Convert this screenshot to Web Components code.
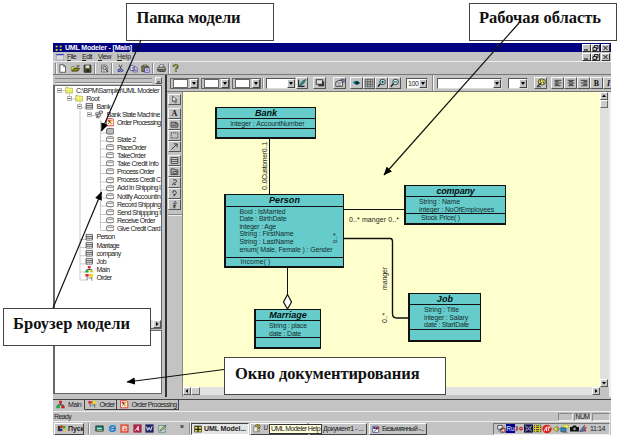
<!DOCTYPE html>
<html lang="ru"><head><meta charset="utf-8"><title>UML Modeler</title>
<style>
html,body{margin:0;width:620px;height:439px;overflow:hidden;background:#fff}
</style></head><body>
<modeler-page></modeler-page>
<script>
const UI = '"Liberation Sans",Arial,sans-serif';
const define = (name, html, ready) => {
  const t = document.createElement('template');
  t.innerHTML = html;
  customElements.define(name, class extends HTMLElement {
    connectedCallback() {
      if (this.shadowRoot) return;
      const r = this.attachShadow({mode: 'open'});
      r.append(t.content.cloneNode(true));
      if (ready) ready(this, r);
    }
  });
};
const ICONS = {
  new: `<path d="M2.500 1h5l2.500 2.500v7.500h-7.500z" fill="#fff" stroke="#222" stroke-width=".9"/><path d="M7.500 1.500v2h2" fill="none" stroke="#222" stroke-width=".8"/>`,
  open: `<path d="M1 9.500v-6h3l1 1h4v2" fill="#ee6" stroke="#553" stroke-width=".8"/><path d="M1 9.500l2.500-3.500h8l-2.500 3.500z" fill="#880" stroke="#222" stroke-width=".8"/><path d="M7 2.500q2-1.500 3.500.7M10.700 1.500v2h-2" fill="none" stroke="#222" stroke-width=".7"/>`,
  save: `<path d="M1.500 1.500h9v9.500h-9z" fill="#553" stroke="#111"/><path d="M3.500 1.800h5v3.700h-5z" fill="#ddc"/><path d="M4.500 7.500h3.500v2.500h-3.500z" fill="#111"/>`,
  preview: `<path d="M2 1.500h6l1.500 1.500v7.500h-7.500z" fill="#eee" stroke="#333" stroke-width=".8"/><circle cx="6" cy="5.500" r="2.200" fill="#bde" stroke="#222"/><path d="M7.500 7l3 3.500" stroke="#222" stroke-width="1.300"/><path d="M3 3h3M3 9h3" stroke="#777" stroke-width=".6"/>`,
  cut: `<path d="M4 1l3 6M8 1l-3 6" stroke="#333" stroke-width="1"/><circle cx="4" cy="8.700" r="1.500" fill="none" stroke="#22a" stroke-width="1.200"/><circle cx="7.700" cy="8.700" r="1.500" fill="none" stroke="#22a" stroke-width="1.200"/>`,
  copy: `<path d="M1.500 2h4l1.500 1.500v5h-5.500zM5.500 4h4l1.500 1.500v5h-5.500z" fill="#eef" stroke="#226" stroke-width=".8"/><path d="M3 5h2M7 7h3M7 8.700h3" stroke="#226" stroke-width=".7"/>`,
  paste: `<path d="M1 2.500h8.500v7.500h-8.500z" fill="#774" stroke="#222" stroke-width=".8"/><path d="M3.500 1h3.500v2h-3.500z" fill="#dd8" stroke="#222" stroke-width=".6"/><path d="M5 5h6v6h-6z" fill="#eef" stroke="#228" stroke-width=".9"/><path d="M6.500 7h3M6.500 8.700h3" stroke="#228" stroke-width=".7"/>`,
  print: `<path d="M4 1h5l-1.500 4h-5z" fill="#fff" stroke="#222" stroke-width=".7"/><path d="M1 5.500l1.500-1.500h8l.5 1.500v4h-10z" fill="#aaa" stroke="#222" stroke-width=".9"/><path d="M1 7.500h10M3 9.800h7" stroke="#222"/><path d="M8 6.500h1.500" stroke="#cc3"/>`,
  help: `<path d="M3.500 4q0-2.600 2.700-2.600t2.500 2.200q0 1.300-1.300 2t-1 1.700M6.300 8.700v2" fill="none" stroke="#222" stroke-width="2.400"/><path d="M3.700 3.800q0-2.100 2.500-2.100t2.200 1.800q0 1.200-1.300 1.900t-.9 1.700M6.200 9v1.400" fill="none" stroke="#dd2" stroke-width="1.200"/>`,
  folder: `<path d="M1 10v-8h3.500l1 1.200h5.500v6.800z" fill="#ee6" stroke="#995" stroke-width=".8"/><path d="M2 4.700h8" stroke="#ffb" stroke-width=".8"/>`,
  class: `<path d="M1.500 2h9v8h-9z" fill="#fff" stroke="#333"/><path d="M1.500 4.700h9M1.500 7.300h9" stroke="#333" stroke-width="1.200"/>`,
  machine: `<path d="M1 4h5v2.500h-5zM6 1.500h4.500v3h-4.500zM2 9h4v2h-4z" fill="#eee" stroke="#333" stroke-width=".9"/><path d="M3.500 6.500v3M8 4.500v4h-2" fill="none" stroke="#333" stroke-width=".9"/>`,
  state: `<rect x=".7" y="2.500" width="10.600" height="7" rx="2.700" fill="#fff" stroke="#333"/><path d="M2 5h8" stroke="#555" stroke-width=".8"/>`,
  blank: `<rect x=".7" y="2" width="10.600" height="8" rx="2.400" fill="#bbb" stroke="#333"/>`,
  process: `<path d="M.8 1h8l2.200 1.500v8.500h-10.200z" fill="#fff" stroke="#d33" stroke-width="1.300"/><path d="M2.500 2.500h3v2.500h-3z" fill="#e22"/><path d="M6 2.500h3.500v2.500h-3.500z" fill="#dc2"/><path d="M4 4l4 4M7 3.500l-4 5" stroke="#222" stroke-width=".9"/><path d="M5.500 6.500h3.500v2.500h-3.500z" fill="#eb2"/>`,
  main: `<path d="M6 4v3M2.500 8v-1.500h7v1.500" fill="none" stroke="#222"/><path d="M4 1.500h4v3h-4z" fill="#d22"/><path d="M.5 7.500h4.500v3h-4.500z" fill="#1a3"/><path d="M7 7.500h4.500v3h-4.500z" fill="#dc1"/>`,
  mainTab: `<path d="M6 3v4M2.500 8v-1.500h7v1.500" fill="none" stroke="#222"/><path d="M4 1h4v3.500h-4z" fill="#d22"/><path d="M.5 7.500h4.500v3.500h-4.500z" fill="#1a3"/><path d="M7 7.500h4.500v3.500h-4.500z" fill="#b22"/>`,
  order: `<path d="M3 3h6M3 4v6M9.500 5v6M5 7h4" fill="none" stroke="#444" stroke-width=".9"/><path d="M.5 1.500h4.500v3.500h-4.500z" fill="#e22"/><path d="M7 1.500h4.500v4h-4.500z" fill="#ed1"/>`,
  pencil: `<path d="M2 2v8h7" fill="none" stroke="#222" stroke-width="1.300"/><path d="M3 9q3-6 6-6.500l1.500-.8-1.500 3q-2 4-6 4.300z" fill="#399" stroke="#144" stroke-width=".8"/>`,
  shadow: `<path d="M4 4h7v6h-7z" fill="#333"/><path d="M1.500 2h7.500v5.500h-7.500z" fill="#ddd" stroke="#222"/>`,
  props: `<path d="M1 5l3-2h5v7h-8z" fill="#eee" stroke="#333"/><path d="M1 5h8M3 7h4M3 8.700h4" stroke="#555" stroke-width=".8"/><path d="M7 1.500h4v3.500l-2-1z" fill="#aac" stroke="#225" stroke-width=".8"/>`,
  eye: `<path d="M1 5.500q4.500-4.500 9 .5q-4.500 4-9-.5z" fill="#077"/><circle cx="6" cy="6" r="1.800" fill="#013"/>`,
  grid: `<path d="M1.500 1.500h9v9h-9zM4.500 1.500v9M7.500 1.500v9M1.500 4.500h9M1.500 7.500h9" fill="none" stroke="#444" stroke-width=".9"/>`,
  zin: `<circle cx="6.700" cy="4.700" r="3.300" fill="#cee" stroke="#222"/><path d="M4 7l-3 3.500" stroke="#222" stroke-width="1.700"/><path d="M5 4.700h3.500M6.700 3v3.500" stroke="#055" stroke-width="1.200"/>`,
  zout: `<circle cx="6.700" cy="4.700" r="3.300" fill="#cee" stroke="#222"/><path d="M4 7l-3 3.500" stroke="#222" stroke-width="1.700"/><path d="M5 4.700h3.500" stroke="#055" stroke-width="1.200"/>`,
  palette: `<ellipse cx="7" cy="4.700" rx="4.300" ry="3.600" fill="#ee5" stroke="#222" stroke-width=".9"/><circle cx="5.300" cy="3.500" r="1" fill="#c22"/><circle cx="8.200" cy="3.300" r="1" fill="#2a3"/><circle cx="9" cy="5.500" r="1" fill="#23c"/><path d="M6.500 5.500l-5 5" stroke="#333" stroke-width="1.600"/><path d="M1 10.500h5" stroke="#333"/>`,
  left: `<path d="M1 2h10M1 4h6M1 6h10M1 8h6M1 10h9" stroke="#111" stroke-width="1.100"/>`,
  center: `<path d="M1 2h10M3 4h6M1 6h10M3 8h6M2 10h8" stroke="#111" stroke-width="1.100"/>`,
  right: `<path d="M1 2h10M5 4h6M1 6h10M5 8h6M2 10h9" stroke="#111" stroke-width="1.100"/>`,
  cursor: `<path d="M3.500 1.500v7.500l2-1.800 1.700 3.500 1.300-.6-1.600-3.300h2.400z" fill="#fff" stroke="#222" stroke-width=".9"/>`,
  note: `<path d="M1.500 3h6.500l2.500 2v4.500h-9z" fill="#bbb" stroke="#222"/><path d="M3 5.500h4M3 7.500h6M7.500 3v2.500h3" fill="none" stroke="#222" stroke-width=".8"/>`,
  dashed: `<path d="M1.500 2.500h9v7h-9z" fill="none" stroke="#222" stroke-dasharray="1.500 1"/>`,
  diag: `<path d="M2 10l7-7M5 2.500h4.500v4.500" fill="none" stroke="#222" stroke-width="1.100"/>`,
  classBtn: `<path d="M1.500 2h9v8h-9z" fill="#ccc" stroke="#333"/><path d="M1.500 4.700h9M1.500 7.300h9" stroke="#333" stroke-width="1"/>`,
  package: `<path d="M1.500 2.500h4l1 1.500h4v6h-9z" fill="#bbb" stroke="#222"/><path d="M4 6h5v2.500h-5z" fill="none" stroke="#222" stroke-width=".8"/>`,
  assoc: `<path d="M4 2.500h4q2 2-1 4h-2l-2 3M5 8.500h3" fill="none" stroke="#222" stroke-width="1"/>`,
  ring: `<path d="M4 2.500h3q3 2.500 0 5l-2 2.500M4 2.500v3M4 7.500h3" fill="none" stroke="#222"/>`,
  inherit: `<path d="M7 1.500l-2.500 3.500h4z" fill="#eee" stroke="#222" stroke-width=".8"/><path d="M6.500 5v3l-3 2.500M4 7.500h3M6.500 7v4" fill="none" stroke="#222"/>`,
  start: `<path d="M1 2.500h3v7h-3" fill="#333"/><path d="M4 2.500q2-1.300 3.500-.4l-.2 3.600h-3.300z" fill="#d22"/><path d="M7.800 2.300l3.400.3v3.300l-3.500-.2z" fill="#2a2"/><path d="M4 6.200h3.300v3.500q-1.800-.6-3.300.4z" fill="#22c"/><path d="M7.700 6.300h3.500v3.800l-3.500-.4z" fill="#dc2"/>`,
  desk: `<path d="M1 2.500h10v7h-10z" fill="#276" stroke="#134"/><path d="M2.500 5h6.500v2h-6.500z" fill="#aed"/><path d="M2 8.700h8" stroke="#db4"/>`,
  ie: `<circle cx="6" cy="6" r="3.700" fill="none" stroke="#27c" stroke-width="2"/><path d="M3 6h6" stroke="#27c" stroke-width="1.500"/><path d="M1 9.500q-1-3 9.500-8" fill="none" stroke="#4ad" stroke-width="1"/>`,
  ppt: `<path d="M.5.500h11v11h-11z" fill="#d43"/><path d="M3 3h6v6h-6z" fill="none" stroke="#fff"/><path d="M4.500 4v4M4.500 4h3v2h-3" fill="none" stroke="#fff"/>`,
  access: `<path d="M.5.500h11v11h-11z" fill="#a24"/><path d="M3 9l4-6v6M5 7h3" fill="none" stroke="#fff" stroke-width="1.200"/>`,
  word: `<path d="M.5.500h11v11h-11z" fill="#226"/><path d="M2 3.500l1.500 5 2-4 2 4 2-5.500" fill="none" stroke="#fff" stroke-width="1.200"/>`,
  edit: `<path d="M1 2h8.500v9h-8.500z" fill="#ddd" stroke="#276" stroke-width=".8"/><path d="M2.500 9q2-5 8.500-7.500-2 6-8 8z" fill="#db5" stroke="#267" stroke-width=".9"/>`,
  uml: `<path d="M.5 1h11v10h-11z" fill="#222"/><path d="M1.500 2.500h3.500v3h-3.500zM7 2.500h3.500v3h-3.500zM1.500 7.500h3.500v2.500h-3.500zM7 7.500h3.500v2.500h-3.500z" fill="#dd3"/>`,
  umlt: `<path d="M1 2.500h3v2.500h-3zM7 2.500h3v2.500h-3zM1 7.500h3v2.500h-3zM7 7.500h3v2.500h-3z" fill="#dd3"/>`,
  hlp: `<path d="M1 4h8v7h-8z" fill="#eee" stroke="#555" stroke-width=".8"/><path d="M4 4q0-2.500 2.700-2.500t2.500 2q0 1.200-1.500 2t-1 2M6.700 8.800v1.500" fill="none" stroke="#222" stroke-width="2.400"/><path d="M4 4q0-2.500 2.700-2.500t2.500 2q0 1.200-1.500 2t-1 2M6.700 8.800v1.500" fill="none" stroke="#ed2" stroke-width="1.300"/>`,
  paint: `<path d="M1 2h9v9h-9z" fill="#fff" stroke="#237" stroke-width="1"/><path d="M2 3h3.500v3h-3.500z" fill="#22a"/><path d="M6 3h4v3.500h-4z" fill="#c22"/><path d="M3 10l6-6" stroke="#222" stroke-width="1.200"/>`,
  child: `<path d="M.5 2h11v8.500h-11z" fill="#ddd" stroke="#88a" stroke-width=".8"/><path d="M.5 2.500h11" stroke="#33c" stroke-width="1.800"/>`,
  t1: `<path d="M1 2h6v5h-6zM5 6h6v5h-6z" fill="#eee" stroke="#333"/><path d="M2 10l8-7" stroke="#444"/><circle cx="8.500" cy="8.500" r="2" fill="none" stroke="#d22"/>`,
  t3: `<path d="M1 2.500q3 3.500 0 7M3 3v6" stroke="#622" fill="none"/><circle cx="8" cy="6" r="2.500" fill="#b22"/><circle cx="8" cy="6" r=".9" fill="#fcc"/>`,
  t4: `<path d="M0 .5h12v11h-12z" fill="#114"/><path d="M2 2q3 4 0 8M10 2q-3 4 0 8M4 3l4 6M8 3l-4 6" fill="none" stroke="#bbd" stroke-width="1"/>`,
  t5: `<path d="M1 3h10M1 6h10M1 9h10M3.500 1v10M8.500 1v10" stroke="#222" stroke-width="2.400"/><path d="M1 3h10M1 6h10M1 9h10M3.500 1v10M8.500 1v10" stroke="#ed2" stroke-width="1.300"/>`,
  t6: `<ellipse cx="6" cy="6" rx="5.700" ry="5" fill="#d22"/><path d="M2.500 8.500l3-5v5M6.500 3.700h4M8.500 3.700l-1 4.500" stroke="#fff" fill="none" stroke-width="1.100"/>`,
  t7: `<path d="M2 4.500h2.500l3.500-3.500v10l-3.500-3.500h-2.500z" fill="#dd3" stroke="#663" stroke-width=".8"/><path d="M9.500 3.500q2 2.500 0 5" fill="none" stroke="#333"/>`,
  t8: `<path d="M4 1h7v5h-7z" fill="#ee4" stroke="#995" stroke-width=".7"/><path d="M1 5h7v5h-7z" fill="#38b" stroke="#146" stroke-width=".8"/><path d="M3 11h7" stroke="#555"/>`,
  t9: `<path d="M0 4h3l1-2h4l1 2h3v6h-12z" fill="#111"/><circle cx="6" cy="6.500" r="1.800" fill="#999"/>`,
  t10: `<path d="M1 10l5-7 3 6z" fill="#39c" stroke="#136" stroke-width=".8"/><path d="M7 1l2 6M4 6l5 4M10 4l-5 6" stroke="#c33" stroke-width="1.200"/>`,
};

// Single-line text whose tracking is tuned to occupy the width in `w`.
define('fit-text', `<style>:host{display:inline-block;white-space:pre;line-height:1}span{display:inline-block}</style><span><slot></slot></span>`, (el, r) => {
  const w = +el.getAttribute('w'); if (!w) return;
  el.style.width = w + 'px';
  const s = r.querySelector('span');
  const n = el.textContent.length;
  const range = document.createRange(); range.selectNodeContents(el);
  const now = range.getBoundingClientRect().width || s.offsetWidth;
  if (now) s.style.letterSpacing = ((w - now) / n).toFixed(3) + 'px';
});
define('ui-icon', `<style>:host{display:block;flex:none;width:12px;height:11px}svg{display:block;width:100%;height:100%}</style><svg viewBox="0 0 12 12" preserveAspectRatio="none" fill="none"></svg>`, (el, r) => {
  const s = el.getAttribute('s'); if (s) { el.style.width = el.style.height = s + 'px'; }
  r.querySelector('svg').innerHTML = ICONS[el.getAttribute('n')] || '';
});
define('tool-button', `<style>:host{display:flex;flex:none;box-sizing:border-box;width:12px;height:12px;background:#c3c3c3;border:1px solid;border-color:#f4f4f4 #555 #555 #f4f4f4;align-items:center;justify-content:center;overflow:hidden;font:bold 8px "Liberation Serif",serif;line-height:9px;color:#111}</style><slot></slot>`, (el) => {
  const w = el.getAttribute('w'), h = el.getAttribute('h');
  if (w) el.style.width = w + 'px'; if (h) el.style.height = h + 'px';
});
define('caption-buttons', `<style>:host{display:flex}b{box-sizing:border-box;width:9px;height:8px;background:#c3c3c3;border:1px solid;border-color:#fff #333 #333 #fff}b+b+b{margin-left:1px}svg{display:block;width:7px;height:6px}</style>
<b><svg viewBox="0 0 7 6"><path d="M1 5h4" stroke="#000"/></svg></b><b><svg viewBox="0 0 7 6"><path d="M1 2.500h3.500v3h-3.500zM2.500 2v-1.500h3.500v3h-1.500" fill="none" stroke="#000" stroke-width=".8"/></svg></b><b><svg viewBox="0 0 7 6"><path d="M1.500 1l4 4M5.500 1l-4 4" stroke="#000" stroke-width=".9"/></svg></b>`);
define('combo-box', `<style>:host{display:flex;flex:none;box-sizing:border-box;height:11px;background:#fff;border:1px solid;border-color:#555 #ddd #ddd #555;font:7px ${UI};line-height:9px}
:host([swatch]){background:#c3c3c3;border-color:#666}:host([swatch]) div{border:1px solid #666;background:#fff;margin:0 2px}
div{flex:1;padding-left:1px;overflow:hidden}b{width:8px;box-sizing:border-box;background:#c3c3c3;border:1px solid;border-color:#fff #444 #444 #fff;display:flex;align-items:center;justify-content:center}i{border:2px solid transparent;border-top:3px solid #000;border-bottom:0}</style><div><slot></slot></div><b><i></i></b>`, el => el.style.width = el.getAttribute('w') + 'px');
define('scroll-arrow', `<style>:host{display:flex;flex:none;box-sizing:border-box;width:8px;height:8px;background:#c8c8c8;border:1px solid;border-color:#fff #555 #555 #fff;align-items:center;justify-content:center}svg{width:6px;height:6px}</style><svg viewBox="0 0 6 6"><path d="M1 4h4l-2-2.500z"/></svg>`, (el, r) => {
  r.querySelector('svg').style.transform = `rotate(${el.getAttribute('turn') || 0}deg)`;
});
define('tree-row', `<style>:host{display:flex;align-items:center;height:8.170px;font:7px ${UI};color:#222}
svg{flex:none;width:5px;height:5px;margin-right:3px}:host([leaf]) svg{visibility:hidden}</style>
<svg viewBox="0 0 5 5"><path d="M.4.400h4.200v4.200h-4.200z" fill="#fff" stroke="#888" stroke-width=".7"/><path d="M1.200 2.500h2.600" stroke="#222" stroke-width=".8"/></svg><ui-icon></ui-icon><slot></slot>`, (el, r) => {
  el.style.paddingLeft = (1.500 + el.getAttribute('level') * 10.250) + 'px';
  const i = document.createElement('ui-icon'); i.setAttribute('n', el.getAttribute('icon')); i.setAttribute('s', 8.500);
  r.querySelector('ui-icon').replaceWith(i); i.style.marginRight = '3px';
});
define('uml-class', `<style>:host{position:absolute;box-sizing:border-box;display:flex;flex-direction:column;background:#66cccb;border:1.500px solid #111;border-width:1px 1.500px 2px 2px;font:6.900px ${UI};color:#142c2c}
h4{margin:0;height:10.500px;border-bottom:1.500px solid #111;font:italic bold 9px ${UI};line-height:10px;text-align:center;color:#001010}
section{flex:1;display:flex;flex-direction:column;box-sizing:border-box}.a{padding-top:1px}.a ::slotted(*){height:7.670px;line-height:7px}
.o{flex:none;border-top:1.500px solid #111;padding-top:1px}</style><h4><slot name="name"></slot></h4><section class="a"><slot></slot></section><section class="o"><slot name="op"></slot></section>`, (el, r) => {
  const [x, y, w, h, pad, op, opad] = el.getAttribute('box').split(' ').map(Number);
  Object.assign(el.style, {left: x + 'px', top: y + 'px', width: w + 'px', height: h + 'px'});
  r.querySelector('.a').style.paddingLeft = pad + 'px';
  r.querySelector('.o').style.cssText = `height:${op}px;padding-left:${opad || pad}px`;
});
define('call-out', `<style>:host{position:absolute;box-sizing:border-box;background:#fff;border:1.500px solid #444;border-width:1px 1px 1.500px 1.500px;font:bold 16.500px "Liberation Serif","Times New Roman",serif;color:#111}</style><slot></slot>`, el => {
  const [x, y, w, h, px, py] = el.getAttribute('box').split(' ').map(Number);
  Object.assign(el.style, {left: x + 'px', top: y + 'px', width: w + 'px', height: h + 'px', padding: `${py}px 0 0 ${px}px`});
});
define('page-tab', `<style>:host{display:flex;align-items:center;box-sizing:border-box;height:10px;padding-left:3px;border:solid #444;border-width:0 1px 1px 0;font:7px ${UI};color:#222;gap:3px}:host([on]){border-bottom-color:transparent}</style><slot></slot>`, el => el.style.width = el.getAttribute('w') + 'px');
define('task-button', `<style>:host{display:flex;flex:none;align-items:center;box-sizing:border-box;height:12px;background:#c3c3c3;border:1px solid;border-color:#fff #444 #444 #fff;font:7px ${UI};color:#222;padding-left:2px;gap:2px;overflow:hidden}:host([on]){background:#e4e4e4;border-color:#444 #fff #fff #444;font-weight:bold}:host([bold]){font-weight:bold}</style><slot></slot>`, el => el.style.width = el.getAttribute('w') + 'px');
define('tool-sep', `<style>:host{display:block;flex:none;width:2px;height:11px;box-sizing:border-box;border-left:1px solid #888;border-right:1px solid #f4f4f4}</style>`);

define('menu-area', `<style>:host{display:block;background:#c3c3c3;font:7px ${UI};color:#222}
.title{height:9px;background:#000080;display:flex;align-items:center;padding:0 1px 0 2px;gap:2px;color:#fff;font-weight:bold}.title caption-buttons,.menu caption-buttons{margin-left:auto}
.menu{height:10px;box-sizing:border-box;display:flex;align-items:center;padding:0 1px 0 3px;border-bottom:1px solid #eee}
.tools{display:flex;align-items:center;height:12px;padding-left:2px;border-bottom:1px solid #777}u{text-decoration-thickness:.6px}
</style>
<div class="title"><ui-icon n="umlt" s="8"></ui-icon><fit-text w="67">UML Modeler - [Main]</fit-text><caption-buttons></caption-buttons></div>
<div class="menu"><ui-icon n="child" s="8"></ui-icon><fit-text w="9" style="margin-left:3px"><u>F</u>ile</fit-text><fit-text w="10" style="margin-left:6px"><u>E</u>dit</fit-text><fit-text w="13" style="margin-left:6px"><u>V</u>iew</fit-text><fit-text w="14" style="margin-left:6px"><u>H</u>elp</fit-text><caption-buttons></caption-buttons></div>
<div class="tools"><tool-sep></tool-sep>
<ui-icon n="new" s="9" style="margin-left:1px"></ui-icon><ui-icon n="open" s="9" style="margin-left:4px"></ui-icon><ui-icon n="save" s="9" style="margin-left:3px"></ui-icon><tool-sep style="margin-left:2px"></tool-sep>
<ui-icon n="preview" s="9" style="margin-left:4px"></ui-icon><tool-sep style="margin-left:2px"></tool-sep>
<ui-icon n="cut" s="9" style="margin-left:3px"></ui-icon><ui-icon n="copy" s="9" style="margin-left:4px"></ui-icon><ui-icon n="paste" s="9" style="margin-left:3px"></ui-icon><tool-sep style="margin-left:2px"></tool-sep>
<ui-icon n="print" s="9" style="margin-left:3px"></ui-icon><tool-sep style="margin-left:2px"></tool-sep><ui-icon n="help" s="9" style="margin-left:1px"></ui-icon></div>`);

const rows = [[0,'folder','C:\\BPM\\Sampler\\UML Modeler',83,1],[1,'folder','Root',13,1],[2,'class','Bank',14,1],[3,'machine','Bank State Machine',53,1],[4,'process','Order Processing',43.5],[4,'blank','',0],[4,'state','State 2',19],[4,'state','PlaceOrder',29],[4,'state','TakeOrder',28.5],[4,'state','Take Credit Info',41.5],[4,'state','Process Order',37],[4,'state','Process Credit C',43.5],[4,'state','Add In Shipping I',43.5],[4,'state','Notify Accountin',43.5],[4,'state','Record Shipping',43.5],[4,'state','Send Shippping I',43.5],[4,'state','Receive Order',38],[4,'state','Give Credit Card',43],[2,'class','Person',18],[2,'class','Marriage',22.5],[2,'class','company',24],[2,'class','Job',9.5],[2,'main','Main',13],[2,'order','Order',15]]
 .map(([l,i,t,w,e]) => `<tree-row level="${l}" icon="${i}"${e?'':' leaf'}>${w?`<fit-text w="${w}">${t}</fit-text>`:''}</tree-row>`).join('');
define('model-browser', `<style>:host{display:flex;flex-direction:column;flex:none;box-sizing:border-box;width:112px;background:#c3c3c3;padding:1px 3px 3px 0}
.grip{height:9px;display:flex;align-items:center;gap:3px;padding:0 0 0 2px;flex:none}.grip i{flex:1;height:3px;border:solid #888;border-width:1px 0;box-shadow:0 1px #eee}
.tree,.doc{background:#fff;border:1.500px solid #666;border-width:1px 1px 1px 2px;box-sizing:border-box;overflow:hidden}
.tree{height:244px;display:flex;flex-direction:column;background:#fff;flex:none}.list{position:relative;flex:1;overflow:hidden}.bar{display:flex;justify-content:flex-end;height:8px;background:#ddd}
.list svg{position:absolute;left:0;top:-.5px}.rows{position:relative}.doc{margin-top:1px;flex:1}</style>
<div class="grip"><i></i><tool-button w="7" h="7"><svg width="5" height="5" viewBox="0 0 5 5"><path d="M1 4h3" stroke="#222"/></svg></tool-button></div>
<div class="tree"><div class="list"><svg width="106" height="200" fill="none" stroke="#bbb" stroke-width=".8"><path d="M4 4.500h10M14.500 8v5h8M25 16v178M25 22h8M35 29.500h8M25 153.500h8M25 161.500h8M25 169.700h8M25 177.900h8M25 186h8M25 194h8M45.500 34v110M45.500 38.500h8M45.500 47h8M45.500 55h8M45.500 63h8M45.500 71h8M45.500 79.500h8M45.500 87.500h8M45.500 96h8M45.500 104h8M45.500 112h8M45.500 120h8M45.500 128.500h8M45.500 136.500h8M45.500 144.500h8"/></svg><div class="rows">${rows}</div></div><div class="bar"><scroll-arrow turn="90"></scroll-arrow></div></div><div class="doc"></div>`);

define('format-bar', `<style>:host{display:flex;flex:none;align-items:center;height:17px;background:#c3c3c3;padding-left:3px;box-sizing:border-box;border-bottom:1px solid #777;overflow:hidden}</style>
<combo-box swatch w="29"></combo-box><combo-box swatch w="29" style="margin-left:2px"></combo-box><combo-box swatch w="29" style="margin-left:2px"></combo-box><tool-sep style="margin-left:1px"></tool-sep>
<combo-box w="30" style="margin-left:2px"></combo-box><tool-button><ui-icon n="pencil" s="10"></ui-icon></tool-button>
<tool-button w="13" style="margin-left:5px"><ui-icon n="shadow" s="10"></ui-icon></tool-button><tool-button w="13" style="margin-left:7px"><ui-icon n="props" s="10"></ui-icon></tool-button>
<tool-button w="13" style="margin-left:4px"><ui-icon n="eye" s="10"></ui-icon></tool-button><tool-button w="12"><ui-icon n="grid" s="10"></ui-icon></tool-button><tool-button w="13"><ui-icon n="zin" s="10"></ui-icon></tool-button><tool-button w="13"><ui-icon n="zout" s="10"></ui-icon></tool-button>
<combo-box w="22" style="margin-left:5px"><fit-text w="10.500" style="line-height:9px">100</fit-text></combo-box><tool-sep style="margin-left:4px;height:16px"></tool-sep><combo-box w="65" style="margin-left:3px"></combo-box><combo-box w="20" style="margin-left:6px"></combo-box>
<tool-button w="13" style="margin-left:6px"><ui-icon n="palette" s="10"></ui-icon></tool-button>
<tool-button w="13" style="margin-left:4px"><ui-icon n="left" s="8"></ui-icon></tool-button><tool-button w="13"><ui-icon n="center" s="8"></ui-icon></tool-button><tool-button w="13"><ui-icon n="right" s="8"></ui-icon></tool-button><tool-button w="13">B</tool-button><tool-button w="13" style="justify-content:flex-start;padding-left:3px"><i>I</i></tool-button>`);

define('tool-palette', `<style>:host{display:flex;flex-direction:column;flex:none;box-sizing:border-box;width:16px;background:#c3c3c3;padding:2px 0 0 1px;font:8px serif;border-right:1px solid #888}.gap{margin-top:3px}hr{border:0;border-top:1px solid #888;border-bottom:1px solid #eee;margin:4px 0 0;width:100%}</style>`
 + [['cursor'],['',1],['note'],['dashed'],['diag'],['classBtn',1],['package'],['assoc'],['ring'],['inherit']].map(([n,g]) => `<tool-button w="13" h="11"${g?' class="gap"':''}>${n?`<ui-icon n="${n}" s="9"></ui-icon>`:'A'}</tool-button>`).join('') + '<hr>');

const F = (w, t, s='') => `<fit-text w="${w}" ${s}>${t}</fit-text>`;
define('diagram-canvas', `<style>:host{display:block;position:relative;background:#ffffcd;overflow:hidden;font:7px ${UI};color:#222}
svg{position:absolute;left:0;top:0}.l{position:absolute}.v{writing-mode:vertical-rl;transform:rotate(180deg)}</style>
<svg width="417" height="295" viewBox="183 92 417 295" fill="none" stroke="#111"><path d="M269.500 139v55M344 209.500h60M287.500 268v27"/><path d="M344 238.500h46.500q2 .2 2 3v72q0 4.500 4 4.500h12" stroke-width="1.400"/><path d="M287.500 294.500l4 7.500-4 7-4-7z" fill="#fff" stroke-width="1.200"/></svg>
<uml-class box="32 15 101 32 13.500 10">${F(22,'Bank','slot="name"')}${F(74,'integer : AccountNumber')}</uml-class>
<uml-class box="41 102 120 74 13.500 9.500 14.500">${F(31,'Person','slot="name"')}${F(46,'Bool : IsMarried')}${F(47,'Date : BirthDate')}${F(36.5,'integer : Age')}${F(54,'String : FirstName')}${F(54,'String : LastName')}${F(93,'enum( Male, Female ) : Gender')}${F(30,'Income( )','slot="op"')}</uml-class>
<uml-class box="221 93 102 40 13 10.500 15">${F(38,'company','slot="name"')}${F(41,'String : Name')}${F(75,'integer : NoOfEmployees')}${F(39,'Stock Price( )','slot="op"')}</uml-class>
<uml-class box="71 217 67 40 13 10.500">${F(37.5,'Marriage','slot="name"')}${F(38,'String : place')}${F(32,'date : Date')}</uml-class>
<uml-class box="225 201 73 49 14 11">${F(16.5,'Job','slot="name"')}${F(35,'String : Title')}${F(44,'integer : Salary')}${F(45,'date : StartDate')}</uml-class>
<div class="l" style="left:166px;top:124px">${F(50,'0..* manger 0..*')}</div>
<div class="l" style="left:150px;top:141px;line-height:5px">*.</div><div class="l" style="left:150px;top:147px;font-size:6px;line-height:5px">ci</div>
<div class="l v" style="left:78px;top:49px;height:49px;letter-spacing:-.35px;line-height:8px;white-space:nowrap">0..0Customer0..1</div>
<div class="l v" style="left:198px;top:174px;height:24px;letter-spacing:-.15px;line-height:8px">manger</div>
<div class="l v" style="left:198px;top:219px;height:12px;letter-spacing:-.1px;line-height:8px">0..*</div>`);

define('tray-bar', `<style>:host{display:flex;flex:none;align-items:center;height:14px;background:#c3c3c3;border-top:1px solid #eee;box-sizing:border-box;padding:0 1px;font:7px ${UI};color:#222}
.q{display:flex;gap:3.600px;margin-left:5px}.t{display:flex;align-items:center;margin-left:auto;width:117px;height:12px;box-sizing:border-box;border:1px solid;border-color:#777 #eee #eee #777;padding-left:3px}.t b{width:9px;height:9px;background:#000090;color:#fff;font:6.500px ${UI};line-height:9px;text-align:center}.t fit-text{margin-left:auto;margin-right:4px}
.tip{position:absolute;left:269px;top:424px;width:53px;height:10px;box-sizing:border-box;border:1px solid #333;background:#ffffdc;padding-left:1px;line-height:8px}</style>
<task-button w="30" bold><ui-icon n="start" s="9"></ui-icon>${F(16,'Пуск')}</task-button><tool-sep style="margin-left:4px"></tool-sep>
<div class="q"><ui-icon n="desk" s="9"></ui-icon><ui-icon n="ie" s="9"></ui-icon><ui-icon n="ppt" s="9"></ui-icon><ui-icon n="access" s="9"></ui-icon><ui-icon n="word" s="9"></ui-icon><ui-icon n="edit" s="9"></ui-icon></div>
<fit-text w="5" style="margin-left:13px;margin-top:-4px;font-weight:bold">»</fit-text><tool-sep style="margin-left:4px"></tool-sep>
<task-button on w="58"><ui-icon n="uml" s="8"></ui-icon>${F(42,'UML Model...')}</task-button>
<task-button w="58" style="margin-left:1px"><ui-icon n="hlp" s="8.500"></ui-icon><fit-text w="6.500" style="font-size:6.500px">U</fit-text></task-button>
<task-button w="58" style="margin-left:1px;padding-left:13px">${F(40,'Документ1 - ...')}</task-button>
<task-button w="58" style="margin-left:2px"><ui-icon n="paint" s="8"></ui-icon>${F(42,'Безымянный -...')}</task-button>
<div class="t"><ui-icon n="t1" s="9"></ui-icon><b>Ru</b><ui-icon n="t3" s="9"></ui-icon><ui-icon n="t4" s="9"></ui-icon><ui-icon n="t5" s="9"></ui-icon><ui-icon n="t6" s="10"></ui-icon><ui-icon n="t7" s="8"></ui-icon><ui-icon n="t8" s="9"></ui-icon><ui-icon n="t9" s="9" style="margin-left:1px"></ui-icon><ui-icon n="t10" s="9"></ui-icon>${F(15,'11:14')}</div>
<div class="tip">${F(49,'UML Modeler Help')}</div>`);

define('modeler-window', `<style>:host{display:flex;flex-direction:column;width:558px;height:392px;background:#c3c3c3;overflow:hidden;font:7px ${UI};color:#222}
menu-area{flex:none}.mid{display:flex;flex:none;height:322px}.work{flex:1;min-width:0;display:flex;flex-direction:column;border-left:2px solid #333;box-sizing:border-box}.row{display:flex;flex:1;min-height:0}.cv{flex:1;display:flex;flex-direction:column}diagram-canvas{flex:none;height:295px}
.h{display:flex;height:8px;background:#e2e2e2}.h scroll-arrow:last-child{margin-left:auto}.v{width:9px;display:flex;flex-direction:column;background:#e0e0e0;height:295px}.v scroll-arrow:last-child{margin-top:auto}.edge{width:2px;background:#eee}.thumb{width:8px;height:8px;box-sizing:border-box;background:#ccc;border:1px solid;border-color:#fff #666 #666 #fff}
.tabs{display:flex;flex:none;height:12px;margin-top:2px;border-top:1px solid #444;box-sizing:border-box}.status{display:flex;flex:none;align-items:center;gap:1px;height:10px;border-top:1px solid #eee;box-sizing:border-box;padding:0 1px}.status i{font-style:normal;box-sizing:border-box;height:8px;border:1px solid;border-color:#888 #eee #eee #888;display:flex;justify-content:center;align-items:center}</style>
<menu-area></menu-area>
<div class="mid"><model-browser></model-browser><div class="work"><format-bar></format-bar><div class="row"><tool-palette></tool-palette><div class="cv"><diagram-canvas></diagram-canvas><div class="h"><scroll-arrow turn="270"></scroll-arrow><div class="thumb" style="width:9px"></div><scroll-arrow turn="90"></scroll-arrow></div></div>
<div class="v"><scroll-arrow></scroll-arrow><div class="thumb"></div><scroll-arrow turn="180"></scroll-arrow></div><div class="edge"></div></div></div></div>
<div class="tabs"><page-tab on w="32"><ui-icon n="mainTab" s="9"></ui-icon>${F(13,'Main')}</page-tab><page-tab w="32"><ui-icon n="order" s="8.500"></ui-icon>${F(15,'Order')}</page-tab><page-tab w="62"><ui-icon n="process" s="8.500"></ui-icon>${F(45,'Order Processing')}</page-tab></div>
<div class="status">${F(17,'Ready','style="margin-right:auto"')}<i style="width:15px"></i><i style="width:17px">${F(14,'NUM')}</i><i style="width:18px"></i></div>
<tray-bar></tray-bar>`);

define('pointer-lines', `<style>:host{position:absolute;left:0;top:0;width:620px;height:439px}svg{display:block}</style>
<svg width="620" height="439" fill="none" stroke="#111" stroke-width="1.200"><defs><marker id="h" markerUnits="userSpaceOnUse" markerWidth="9" markerHeight="8" refX="8" refY="4" orient="auto"><path d="M0 0.400l8.500 3.600-8.500 3.600z" fill="#000" stroke="none"/></marker></defs>
<path d="M141 40L101.500 131" marker-end="url(#h)"/><path d="M53 308L101.500 192" marker-end="url(#h)"/><path d="M519 23L384 175" marker-end="url(#h)"/><path d="M224 369.500L127 382" marker-end="url(#h)"/></svg>`);

define('modeler-page', `<style>:host{display:block;position:relative;box-sizing:border-box;width:620px;height:439px;padding:43px 0 0 53px;background:#fff}</style>
<modeler-window></modeler-window>
<call-out box="125.500 3 148 37.500 10 3.500">${F(104,'Папка модели')}</call-out>
<call-out box="469 3 148 37.500 9 3.500">${F(122,'Рабочая область')}</call-out>
<call-out box="3 308 148 38 9 4.500">${F(117,'Броузер модели')}</call-out>
<call-out box="224 357 222 38 10 5.500">${F(184.500,'Окно документирования')}</call-out>
<pointer-lines></pointer-lines>`);
</script></body></html>
